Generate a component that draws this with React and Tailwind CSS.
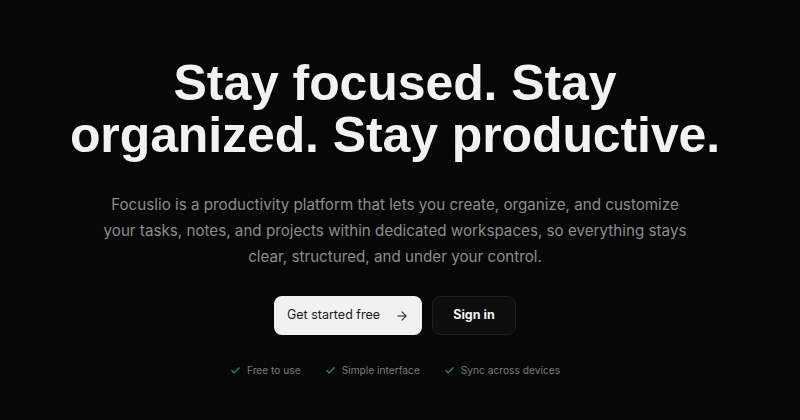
import { Check, ArrowRight } from "lucide-react";

export default function App() {
  const features = ["Free to use", "Simple interface", "Sync across devices"];

  return (
    <div className="w-[800px] h-[420px] bg-[#070707] overflow-hidden">
      <div className="w-[790px] flex flex-col items-center font-['Liberation_Sans',Arial,sans-serif]">
        {/* Hero heading */}
        <h1 className="mt-[57px] text-center text-[#f2f2f2] font-bold text-[50px] leading-[52px] tracking-[-0.1px] whitespace-nowrap">
          Stay focused. Stay
          <br />
          organized. Stay productive.
        </h1>

        <p className="mt-[31px] text-center text-[#8c8c8c] text-[15.2px] leading-[26px] whitespace-nowrap font-['Inter',sans-serif]">
          Focuslio is a productivity platform that lets you create, organize, and customize
          <br />
          your tasks, notes, and projects within dedicated workspaces, so everything stays
          <br />
          clear, structured, and under your control.
        </p>

        {/* Actions */}
        <div className="mt-[26px] flex gap-[10px] font-['Inter',sans-serif]">
          <button className="h-[39px] w-[148px] rounded-[8px] bg-[#f1f1f1] text-[#1a1a1a] text-[12.5px] flex items-center justify-center gap-[15px]">
            Get started free
            <ArrowRight size={14} strokeWidth={1.8} />
          </button>
          <button className="h-[39px] w-[84px] rounded-[8px] bg-[#0e0e0e] border border-[#1f1f1f] text-[#f2f2f2] text-[12.5px] font-bold">
            Sign in
          </button>
        </div>

        {/* Feature list */}
        <div className="mt-[28px] flex gap-[24px] text-[#7a7a7a] text-[10.2px] font-['Inter',sans-serif]">
          {features.map((f) => (
            <div key={f} className="flex items-center gap-[6px]">
              <Check size={11} strokeWidth={2.4} className="text-[#3c9a4a]" />
              {f}
            </div>
          ))}
        </div>
      </div>
    </div>
  );
}
